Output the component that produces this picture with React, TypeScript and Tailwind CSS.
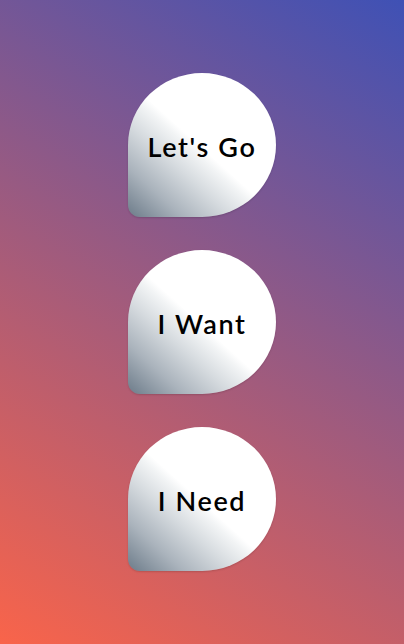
import React from 'react';

const labels = ["Let's Go", 'I Want', 'I Need'];

const Bubble: React.FC<{ label: string }> = ({ label }) => (
  <button
    type="button"
    className="flex h-[144px] w-[148px] items-center justify-center rounded-[50%_50%_50%_12px] bg-[linear-gradient(42deg,#6c7b89_0%,#aab3bc_18%,#d6dbdf_34%,#f2f4f5_45%,#ffffff_49%)] shadow-[0_1px_2px_rgba(0,0,0,0.15)]"
  >
    <span className="pt-1 font-['Lato',sans-serif] text-[27px] font-semibold tracking-[0.06em] text-black">{label}</span>
  </button>
);

export default function App() {
  return (
    <div className="flex h-[644px] w-full flex-col items-center justify-center gap-[33px] bg-[linear-gradient(32deg,#f9644a,#3f51b5)]">
      {labels.map((l) => (
        <Bubble key={l} label={l} />
      ))}
    </div>
  );
}
